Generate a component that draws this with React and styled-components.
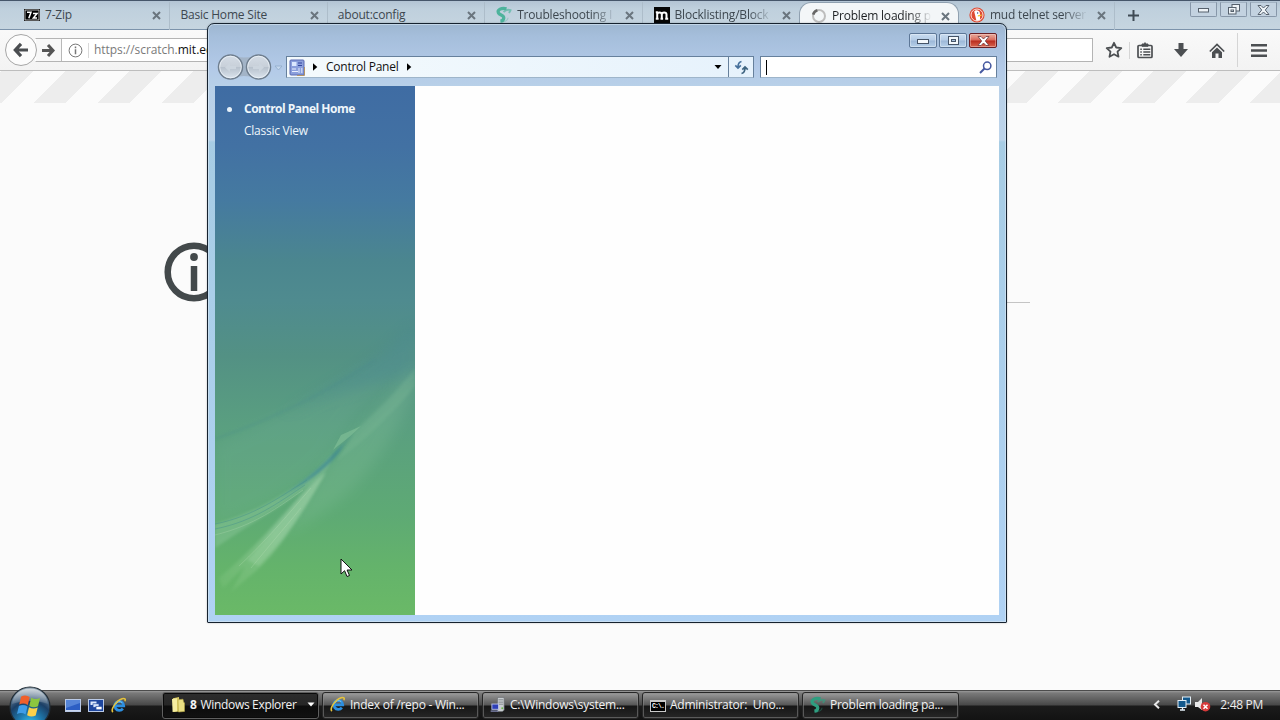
import React from 'react';
import styled, { createGlobalStyle, css } from 'styled-components';

const GlobalStyle = createGlobalStyle`
  *, *::before, *::after { box-sizing: border-box; }
  html, body { margin: 0; padding: 0; overflow: hidden; }
  body { font-family: "Open Sans", "Noto Sans", sans-serif; font-size: 12px; color: #111; }
  svg { display: block; flex: none; overflow: visible; }
`;

const Desktop = styled.div`
  position: relative;
  width: 1280px;
  height: 720px;
  display: flex;
  flex-direction: column;
  background: #fbfbfb;
  overflow: hidden;
`;

const Label = styled.span`
  white-space: pre;
  line-height: 16px;
  letter-spacing: ${(p) => p.$track ?? -0.3}px;
  font-weight: ${(p) => (p.$bold ? 700 : 400)};
  color: ${(p) => p.$color || 'inherit'};
`;

/* ---------- Browser ---------- */

const Browser = styled.div`
  flex: 1;
  display: flex;
  flex-direction: column;
`;

const TabStrip = styled.div`
  height: 30px;
  flex: none;
  display: flex;
  align-items: flex-start;
  padding: 1px 3px 0 13px;
  border-top: 1px solid #46566a;
  border-bottom: 1px solid #7c93ab;
  background: linear-gradient(#b3c4d4, #bfd0dd 8px, #c6d5e0);
`;

const Tab = styled.div`
  position: relative;
  width: 157.4px;
  height: 28px;
  flex: none;
  display: flex;
  align-items: center;
  gap: 5px;
  padding: 0 8px 2px ${(p) => (p.$icon ? 11 : 10)}px;
  color: #3d474f;
  border-right: 1px solid ${(p) => (p.$plain ? 'transparent' : '#adbdca')};
  ${(p) =>
    p.$active &&
    css`
      color: #1c1f22;
      width: 160px;
      margin: 0 -1px 0 -1px;
      padding-bottom: 1px;
      background: #f3f6f8;
      border: 1px solid #8fa0b0;
      border-bottom: 0;
      border-radius: 12px 12px 0 0;
    `}
`;

const TabTitle = styled(Label)`
  flex: 1;
  min-width: 0;
  ${(p) => p.$fade && css`mask-image: linear-gradient(90deg, #000 calc(100% - 28px), transparent calc(100% - 4px));`}
`;

const NewTab = styled.div`
  width: 36px;
  height: 26px;
  display: grid;
  place-items: center;
`;

const CaptionRow = styled.div`
  margin-left: auto;
  display: flex;
  gap: 3px;
`;

const GhostCaption = styled.div`
  width: 27px;
  height: 15px;
  display: grid;
  place-items: center;
  border: 1px solid #8797a9;
  border-top-color: #a3b3c3;
  border-radius: 0 0 2px 2px;
  background: #c3d2e0;
`;

const NavBar = styled.div`
  height: 41px;
  flex: none;
  display: flex;
  align-items: center;
  padding: 0 13px 0 5px;
  background: linear-gradient(#f9f9f9, #f3f3f3);
  border-bottom: 1px solid #bdbdbd;
`;

const BackButton = styled.div`
  width: 32px;
  height: 32px;
  display: grid;
  place-items: center;
  border: 1px solid #a6a6a6;
  border-radius: 50%;
  background: #fcfcfc;
  z-index: 1;
`;

const UrlField = styled.div`
  width: 1058px;
  height: 24px;
  margin-left: -2px;
  display: flex;
  align-items: center;
  border: 1px solid #b4b4b4;
  border-left-color: transparent;
  background: #fff;
`;

const ForwardButton = styled.div`
  width: 26px;
  height: 22px;
  display: grid;
  place-items: center;
  border-right: 1px solid #b8b8b8;
  background: #f8f8f8;
`;

const Identity = styled.div`
  width: 27px;
  height: 15px;
  display: grid;
  place-items: center;
  border-right: 1px solid #d9d9d9;
`;

const UrlText = styled.div`
  display: flex;
  padding-left: 5px;
`;

const ToolIcons = styled.div`
  flex: 1;
  display: flex;
  align-items: center;
  padding-left: 12px;
`;

const ToolSlot = styled.span`
  margin-left: ${(p) => p.$lead}px;
`;

const Divider = styled.i`
  display: block;
  width: 1px;
  height: ${(p) => p.$h}px;
  background: #d5d5d5;
`;

const Stripes = styled.div`
  height: 32px;
  flex: none;
  background: repeating-linear-gradient(135deg,
    #fbfbfb 0 1.41px, #ededed 1.41px 24.04px, #fbfbfb 24.04px 45.255px);
`;

const ErrorPage = styled.div`
  flex: 1;
  width: 866px;
  margin-left: 164px;
  padding-top: 139px;
  display: flex;
  align-items: flex-start;
  gap: 30px;
`;

const ErrorRule = styled.div`
  flex: 1;
  height: 61px;
  border-bottom: 1px solid #c4c4c4;
`;

/* ---------- Control Panel window ---------- */

const GlassWindow = styled.div`
  position: absolute;
  left: 207px;
  top: 23px;
  width: 800px;
  height: 600px;
  display: flex;
  flex-direction: column;
  padding: 0 7px 7px;
  border: 1px solid #16222f;
  border-radius: 7px 7px 1px 1px;
  background:
    linear-gradient(#9db6d0 0, #a5bedb 12px, #b3cae8 45px, #b8d0e8 62px, #bdd4ea 116px, transparent 118px),
    linear-gradient(#a5cbe0, #b0d2f4);
  box-shadow: inset 0 0 0 1px #d5e6f3aa, 0 0 2px #0004;
`;

const TitleBar = styled.div`
  height: 32px;
  flex: none;
  display: flex;
  justify-content: flex-end;
  gap: 2px;
  padding: 9px 2px 0 0;
`;

const CaptionButton = styled.div`
  width: 28px;
  height: 15px;
  display: grid;
  place-items: center;
  border: 1px solid ${(p) => (p.$close ? '#6a1f24' : '#5d7797')};
  border-radius: 2px;
  background: ${(p) =>
    p.$close
      ? 'linear-gradient(#e59a8b 0 2px, #d9695a 6px, #b92d20 7px, #d9654f)'
      : 'linear-gradient(#c9dcf1 0, #b5cce6 6px, #9db8d8 7px, #b8d1ea)'};
  box-shadow: inset 0 0 0 1px #ffffff55;
`;

const AddressRow = styled.div`
  height: 30px;
  flex: none;
  display: flex;
  align-items: flex-start;
  padding: 0 2px 0 2px;
`;

const NavOrbs = styled.div`
  width: 69px;
  height: 26px;
  display: flex;
  margin-top: -2px;
`;

const Breadcrumb = styled.div`
  width: 468px;
  height: 22px;
  display: flex;
  align-items: center;
  padding-left: 2px;
  border: 1px solid #66809c;
  border-bottom-color: #9eb5ca;
  background: linear-gradient(90deg, #f4fafd, #e6f2fc);
`;

const Spacer = styled.span`
  flex: ${(p) => (p.$w ? `0 0 ${p.$w}px` : '1')};
`;

const Refresh = styled.div`
  width: 25px;
  height: 20px;
  display: grid;
  place-items: center;
  border-left: 1px solid #66809c;
`;

const SearchField = styled.div`
  flex: 1;
  height: 22px;
  margin-left: 6px;
  display: flex;
  align-items: center;
  justify-content: space-between;
  padding: 0 4px 0 5px;
  border: 1px solid #66809c;
  border-bottom-color: #9eb5ca;
  background: #fff;
`;

const Caret = styled.i`
  width: 1px;
  height: 15px;
  background: #000;
`;

const Client = styled.div`
  flex: 1;
  display: flex;
  background: #fefefe;
`;

const Sidebar = styled.div`
  position: relative;
  width: 200px;
  overflow: hidden;
  color: #eef6fb;
  background: linear-gradient(#3f6ca3 0, #4271a3 60px, #457aa0 115px, #4b868f 175px, #4f8b8f 215px, #539184 270px,
    #5a9f80 340px, #5eaa74 430px, #64b36b 480px, #6ab967 529px);
`;

const AuroraLayer = styled.div`
  position: absolute;
  inset: 0;
`;

const SideLinks = styled.div`
  position: relative;
  display: flex;
  flex-direction: column;
  gap: 6px;
  padding: 15px 0 0 12px;
`;

const SideLink = styled.div`
  display: flex;
  align-items: center;
  height: 16px;
  &::before {
    content: '';
    width: 5px;
    height: 5px;
    margin-right: 12px;
    border-radius: 50%;
    background: ${(p) => (p.$current ? '#e8f2fa' : 'transparent')};
  }
`;

const Pointer = styled.div`
  position: absolute;
  left: 340px;
  top: 558px;
`;

/* ---------- Taskbar ---------- */

const Taskbar = styled.div`
  position: relative;
  height: 30px;
  flex: none;
  display: flex;
  align-items: flex-start;
  border-top: 1px solid #4c4c4c;
  background: linear-gradient(#9a9a9a 0, #7a7a7a 2px, #484848 14px, #1b1b1b 15px, #121212 30px);
`;

const StartOrb = styled.div`
  width: 62px;
  padding-left: 9px;
  margin-top: -5px;
`;

const QuickLaunch = styled.div`
  width: 100px;
  display: flex;
  align-items: center;
  gap: 7px;
  height: 29px;
  padding-left: 3px;
`;

const TaskList = styled.div`
  display: flex;
  gap: 3px;
  padding-top: 1px;
`;

const Task = styled.div`
  width: 157px;
  height: 27px;
  display: flex;
  align-items: center;
  gap: 4px;
  padding: 0 3px 2px 7px;
  color: #f2f2f2;
  border: 1px solid ${(p) => (p.$pressed ? '#5f5f5f' : '#262626')};
  border-radius: 3px;
  box-shadow: inset 0 0 0 1px ${(p) => (p.$pressed ? '#0a0a0a' : '#8b8b8b88')};
  background: ${(p) =>
    p.$pressed
      ? 'linear-gradient(#2d2d2d, #262626 12px, #0c0c0c 13px, #111)'
      : 'linear-gradient(#9c9c9c, #565656 12px, #161616 13px, #262626)'};
`;

const Tray = styled.div`
  margin-left: auto;
  height: 27px;
  display: flex;
  align-items: center;
  padding-right: 17px;
  color: #ededed;
`;

/* ---------- Icons ---------- */

const TabClose = () => (
  <svg width="9" height="9" viewBox="0 0 9 9">
    <path d="M1 1l7 7M8 1l-7 7" stroke="#6a757e" strokeWidth="2" />
  </svg>
);

const SevenZip = () => (
  <svg width="16" height="12" viewBox="0 0 16 12">
    <rect width="16" height="12" fill="#000" />
    <rect x="1" y="1" width="14" height="10" fill="none" stroke="#fff" strokeWidth=".7" />
    <path d="M3 3.3h4L4.8 9.2M9 4.5h4L9.4 9H13" fill="none" stroke="#fff" strokeWidth="1.5" />
  </svg>
);

const ScratchSwirl = ({ tint = '#4db39c' }) => (
  <svg width="16" height="16" viewBox="0 0 16 16" fill="none" stroke={tint}>
    <path d="M10.500 1.800C5.500.3 1 3 2.400 5.900 3.800 8.400 8 8 7.800 11c-.2 2-1.800 3-3.400 3.200" strokeWidth="3.200" />
    <path d="M7.500 5c2.500-2.400 4.800-2.600 7-1.800L13 6" strokeWidth="1.900" opacity=".65" />
    <path d="M7 14.800c3-.4 4.800-2 5-4" strokeWidth="1.200" opacity=".35" />
  </svg>
);

const MozM = () => (
  <svg width="16" height="16" viewBox="0 0 16 16">
    <rect width="16" height="16" fill="#060606" />
    <path d="M3.200 4.500V12M3.200 7.500c0-2.800 4.600-2.800 4.600 0V12M7.800 7.500c0-2.800 4.700-2.800 4.700 0V12M1.800 5.200h2M1.800 11.800h2.800M6.500 11.800h2.600M11.200 11.800h3" fill="none" stroke="#fff" strokeWidth="2" />
  </svg>
);

const Throbber = () => (
  <svg width="16" height="16" viewBox="0 0 16 16" fill="none">
    <circle cx="8" cy="8" r="6" stroke="#bdbdbd" strokeWidth="2" />
    <path d="M2.200 6.600A6 6 0 0 1 6.400 2.200" stroke="#666" strokeWidth="2.600" />
  </svg>
);

const Duck = () => (
  <svg width="16" height="16" viewBox="0 0 16 16">
    <circle cx="8" cy="8" r="7.600" fill="#de4a33" />
    <circle cx="8" cy="8" r="6" fill="none" stroke="#fbe3de" strokeWidth="1" />
    <path d="M5.200 4.500C6.500 2.600 10.500 3 10.900 6l.2 6.800-3.600 1.200z" fill="#fff" />
    <path d="M8.800 8.200l4-.6-.4 1.300-3.600.6z" fill="#f8c42c" />
    <circle cx="8.600" cy="6" r=".7" fill="#2d4f8e" />
  </svg>
);

const IeIcon = () => (
  <svg width="16" height="17" viewBox="0 0 17 17" fill="none">
    <path d="M12.600 11.800A4.800 4.800 0 1 1 13.600 9H5" stroke="#2c8fe0" strokeWidth="2.900" />
    <path d="M12 5.500A4.400 4.400 0 0 0 5 7" stroke="#8dd0f8" strokeWidth="1" />
    <path d="M2 15.500C-.5 13 5 3.500 11.800 1.400c3-.9 4 .2 3 2.600" stroke="#e5c33c" strokeWidth="1.700" />
  </svg>
);

const FolderPair = () => (
  <svg width="16" height="17" viewBox="-1 0 16 17">
    <path d="M2 2.200L8 1l1 14.500-6.600.5z" fill="#d8c961" />
    <path d="M1 3l5-.8v13L1.600 16z" fill="#f5eda0" />
    <path d="M7 3.800l5-.6.6 3 .9.600v8.600L7.500 16z" fill="#eadf83" stroke="#b5a643" strokeWidth=".6" />
  </svg>
);

const ServerIcon = () => (
  <svg width="16" height="17" viewBox="0 0 17 17">
    <path d="M8 1h7v13.500l-2 1.500H8z" fill="#c9cdd0" stroke="#6b6f74" strokeWidth=".7" />
    <path d="M9 3.500h5M9 6h5M9 8.200h5" stroke="#82878d" />
    <rect x="2" y="8" width="7" height="5.600" fill="#2e3fb7" stroke="#b8c0e8" />
    <path d="M.7 15.500h8" stroke="#8389b4" strokeWidth="1.400" />
    <circle cx="13" cy="12.500" r="1" fill="#68b64a" />
  </svg>
);

const ConsoleBox = styled.div`
  width: 16px;
  height: 12px;
  flex: none;
  margin-top: 2px;
  display: flex;
  align-items: center;
  padding-left: 1px;
  background: #000;
  border: 1px solid #c9c9c9;
  border-top-width: 2px;
  color: #fff;
  font: 700 6.5px "Liberation Mono", monospace;
  letter-spacing: -0.9px;
`;

const StartLogo = () => (
  <svg width="42" height="42" viewBox="0 0 42 42">
    <defs>
      <radialGradient id="orb" cx=".5" cy=".95" r=".95">
        <stop offset="0" stopColor="#39c9f2" />
        <stop offset=".3" stopColor="#1f7fb4" />
        <stop offset=".62" stopColor="#1b3f66" />
        <stop offset="1" stopColor="#8b9daa" />
      </radialGradient>
      <linearGradient id="gloss" x1="0" y1="0" x2="0" y2="1">
        <stop offset="0" stopColor="#fff" stopOpacity=".65" />
        <stop offset="1" stopColor="#fff" stopOpacity=".12" />
      </linearGradient>
    </defs>
    <circle cx="21" cy="21" r="20" fill="url(#orb)" stroke="#222d36" strokeWidth="1.200" />
    <path d="M3 18C4 8 12 2.500 21 2.500S38 8 39 18c-10-4-24-4-36 0z" fill="url(#gloss)" />
    <path d="M12.200 10.500c3-1.600 5.700-1.300 8.500.5l-1.900 8c-2.900-1.700-5.700-1.900-8.600-.4z" fill="#f0602b" />
    <path d="M22.200 11.800c3 1.600 5.700 1.700 8.800.2l-2 8.200c-3 1.500-5.800 1.300-8.700-.3z" fill="#8cc63f" />
    <path d="M9.900 20c3-1.500 5.700-1.300 8.600.4l-2 8c-2.800-1.700-5.500-1.900-8.500-.4z" fill="#3e9de8" />
    <path d="M20 21.300c3 1.600 5.700 1.700 8.700.3l-2 8c-3 1.500-5.700 1.300-8.600-.3z" fill="#fbd04a" />
  </svg>
);

const tabs = [
  { title: '7-Zip', icon: <SevenZip /> },
  { title: 'Basic Home Site' },
  { title: 'about:config' },
  { title: 'Troubleshooting I', icon: <ScratchSwirl />, fade: true },
  { title: 'Blocklisting/Block', icon: <MozM />, fade: true, plain: true },
  { title: 'Problem loading p', icon: <Throbber />, fade: true, active: true },
  { title: 'mud telnet server', icon: <Duck />, fade: true },
];

const tasks = [
  { title: 'Index of /repo - Win...', icon: <IeIcon /> },
  { title: 'C:\\Windows\\system...', icon: <ServerIcon /> },
  { title: 'Administrator:  Uno...', icon: <ConsoleBox>C:\.</ConsoleBox> },
  { title: 'Problem loading pa...', icon: <ScratchSwirl tint="#2f9e80" /> },
];

const BrowserToolbar = () => (
  <NavBar>
    <BackButton>
      <svg width="16" height="14" viewBox="0 0 16 14" fill="none" stroke="#4a4d50" strokeWidth="3.200">
        <path d="M8 .8L2.300 7 8 13.200M2.500 7H15" />
      </svg>
    </BackButton>
    <UrlField>
      <ForwardButton>
        <svg width="13" height="13" viewBox="0 0 13 13" fill="none" stroke="#555" strokeWidth="3">
          <path d="M6 1l5 5.500L6 12M0 6.500h11" />
        </svg>
      </ForwardButton>
      <Identity>
        <svg width="15" height="15" viewBox="0 0 15 15" fill="none" stroke="#777">
          <circle cx="7.500" cy="7.500" r="6.400" />
          <path d="M7.500 6.300v5M7.500 3.400v1.800" strokeWidth="1.500" />
        </svg>
      </Identity>
      <UrlText>
        <Label $color="#7a7a7a" $track={-0.05}>https://scratch.</Label>
        <Label $color="#111" $track={0}>mit.edu</Label>
      </UrlText>
    </UrlField>
    <ToolIcons>
      <svg width="18" height="18" viewBox="0 0 18 18" fill="none" stroke="#4c4f52" strokeWidth="1.800">
        <path d="M9 1.800l2.200 4.700 5.100.6-3.800 3.500 1 5.100L9 13.200l-4.500 2.500 1-5.100L1.700 7.100l5.100-.6z" strokeLinejoin="round" />
      </svg>
      <ToolSlot $lead={6}><Divider $h={17} /></ToolSlot>
      <ToolSlot $lead={7}>
        <svg width="16" height="17" viewBox="0 0 16 17" fill="none" stroke="#4c4f52" strokeWidth="1.700">
          <path d="M5 3.500H2a1 1 0 0 0-1 1V14.500a1 1 0 0 0 1 1h12a1 1 0 0 0 1-1v-10a1 1 0 0 0-1-1h-3" />
          <path d="M5 4.300V2h1.500l1.500-1.300L9.500 2H11v2.300z" fill="#4c4f52" strokeWidth="1" />
          <path d="M3.300 7.200h1.500M6.300 7.200h7M3.300 10h1.500M6.300 10h7M3.300 12.800h1.500M6.300 12.800h7" strokeWidth="1.500" />
        </svg>
      </ToolSlot>
      <ToolSlot $lead={21}>
        <svg width="14" height="14" viewBox="0 0 14 14" fill="#4c4f52">
          <path d="M4.500 0h5v6H14l-7 8-7-8h4.500z" />
        </svg>
      </ToolSlot>
      <ToolSlot $lead={21}>
        <svg width="16" height="15" viewBox="0 0 16 15">
          <path d="M.8 8.500L8 1.500l7.200 7" fill="none" stroke="#4c4f52" strokeWidth="1.700" />
          <path d="M3 9.300l5-4.800 5 4.800V15H9.500v-4.500h-3V15H3z" fill="#4c4f52" />
        </svg>
      </ToolSlot>
      <ToolSlot $lead={12}><Divider $h={34} /></ToolSlot>
      <ToolSlot $lead={13}>
        <svg width="16" height="13" viewBox="0 0 16 13" fill="#4c4f52">
          <path d="M0 0h16v2.600H0zM0 5.200h16v2.600H0zM0 10.400h16V13H0z" />
        </svg>
      </ToolSlot>
    </ToolIcons>
  </NavBar>
);

const BrowserWindow = () => (
  <Browser>
    <TabStrip>
      {tabs.map((t) => (
        <Tab key={t.title} $icon={!!t.icon} $active={t.active} $plain={t.plain}>
          {t.icon}
          <TabTitle $fade={t.fade} $track={-0.2}>{t.title}</TabTitle>
          <TabClose />
        </Tab>
      ))}
      <NewTab>
        <svg width="11" height="11" viewBox="0 0 11 11">
          <path d="M5.500 0v11M0 5.500h11" stroke="#3f4a54" strokeWidth="2" />
        </svg>
      </NewTab>
      <CaptionRow>
        <GhostCaption>
          <svg width="11" height="6" viewBox="0 0 11 6"><rect x=".5" y="1.500" width="10" height="3.500" fill="#eef3f7" stroke="#56616d" /></svg>
        </GhostCaption>
        <GhostCaption>
          <svg width="12" height="11" viewBox="0 0 12 11" fill="#eef3f7" stroke="#56616d">
            <rect x="4" y=".5" width="7.500" height="6.500" />
            <rect x=".5" y="3.500" width="7.500" height="6.500" />
            <rect x="3" y="6" width="2.500" height="1.500" />
          </svg>
        </GhostCaption>
        <GhostCaption>
          <svg width="13" height="10" viewBox="0 0 13 10">
            <path d="M1 .5h3l2.500 2.500L9 .5h3L8.300 5l3.700 4.500H9L6.500 7 4 9.500H1L4.700 5z" fill="#eef3f7" stroke="#56616d" />
          </svg>
        </GhostCaption>
      </CaptionRow>
    </TabStrip>
    <BrowserToolbar />
    <Stripes />
    <ErrorPage>
      <svg width="60" height="60" viewBox="0 0 60 60" fill="none" stroke="#43494b">
        <circle cx="30" cy="30" r="26.300" strokeWidth="6.500" />
        <path d="M30 24v25" strokeWidth="6.500" />
        <circle cx="30" cy="15" r="3.900" fill="#43494b" stroke="none" />
      </svg>
      <ErrorRule />
    </ErrorPage>
  </Browser>
);

const Aurora = () => (
  <AuroraLayer>
    <svg width="200" height="529" viewBox="0 0 200 529">
      <defs>
        <filter id="soft" x="-20%" y="-20%" width="140%" height="140%"><feGaussianBlur stdDeviation="1.600" /></filter>
        <filter id="haze" x="-30%" y="-30%" width="160%" height="160%"><feGaussianBlur stdDeviation="7" /></filter>
        <linearGradient id="ray" x1="0" y1="1" x2="1" y2="0">
          <stop offset="0" stopColor="#a9dca0" stopOpacity=".1" />
          <stop offset=".5" stopColor="#b4dfba" stopOpacity=".35" />
          <stop offset="1" stopColor="#b4dfba" stopOpacity=".3" />
        </linearGradient>
      </defs>
      <path d="M0 358C70 330 140 290 200 248V285C150 305 130 340 112 372 80 405 40 428 0 440z" fill="#7fb5a4" opacity=".15" filter="url(#haze)" />
      <path d="M60 330C110 306 160 276 200 238V290C160 296 110 310 60 330z" fill="#3f8093" opacity=".3" filter="url(#haze)" />
      <path d="M0 353C60 332 110 308 160 274" fill="none" stroke="#3f8090" strokeWidth="2" opacity=".22" filter="url(#soft)" />
      <path d="M200 278C165 322 150 338 112 378L70 450 110 425C150 400 180 350 200 305z" fill="#8cc6a0" opacity=".24" filter="url(#haze)" />
      <path d="M200 282C185 302 165 322 140 345L122 375C155 350 180 325 200 300z" fill="#8cc6a0" opacity=".2" filter="url(#soft)" />
      <path d="M0 438C50 424 92 396 118 368L113 382C90 408 50 428 0 462z" fill="#94cca2" opacity=".38" filter="url(#soft)" />
      <path d="M62 414C88 396 118 372 138 347 126 366 104 392 62 414z" fill="#2f7d96" opacity=".35" filter="url(#soft)" />
      <path d="M76 404C98 390 112 376 128 358 124 370 104 390 76 404z" fill="#2f7d96" opacity=".5" filter="url(#soft)" />
      <path d="M0 438C40 430 66 410 92 394M0 443C40 435 64 416 90 399" fill="none" stroke="#3f8b8c" opacity=".4" />
      <path d="M0 449C40 439 62 422 88 404" fill="none" stroke="#b4dcb4" strokeWidth="1" opacity=".3" />
      <path d="M118 364l8-15 20-9c-10 10-18 16-28 24z" fill="#8cc79d" opacity=".5" />
      <path d="M111 386C86 402 60 445 4 492L8 502 30 480 16 506 42 484C68 460 90 422 111 386z" fill="url(#ray)" filter="url(#soft)" />
      <path d="M111 386C90 402 66 438 32 474L44 480C70 452 92 420 111 386z" fill="#a5d7aa" opacity=".35" filter="url(#soft)" />
      <path d="M96 402C70 432 50 456 24 480M86 422C66 446 54 460 36 482" fill="none" stroke="#c0e4bd" opacity=".25" />
    </svg>
  </AuroraLayer>
);

const Triangle = ({ down }) => (
  <svg width="8" height="8" viewBox="0 0 8 8" fill="#000">
    <path d={down ? 'M.5 2h7L4 6z' : 'M2 .3v7.400L6.300 4z'} />
  </svg>
);

const ControlPanel = () => (
  <GlassWindow>
    <TitleBar>
      <CaptionButton>
        <svg width="12" height="6" viewBox="0 0 12 6"><rect x=".5" y="1.500" width="11" height="4" fill="#f3f8fc" stroke="#455468" /></svg>
      </CaptionButton>
      <CaptionButton>
        <svg width="11" height="9" viewBox="0 0 11 9" stroke="#455468">
          <rect x=".5" y=".5" width="10" height="8" fill="#f3f8fc" />
          <rect x="3.500" y="3.500" width="4" height="2" fill="#a9c2de" />
        </svg>
      </CaptionButton>
      <CaptionButton $close>
        <svg width="13" height="10" viewBox="0 0 13 10">
          <path d="M1 .5h3l2.500 2.500L9 .5h3L8.300 5l3.700 4.500H9L6.500 7 4 9.500H1L4.700 5z" fill="#fff" stroke="#6b3a40" strokeWidth=".8" />
        </svg>
      </CaptionButton>
    </TitleBar>
    <AddressRow>
      <NavOrbs>
        <svg width="66" height="26" viewBox="0 0 66 26">
          <defs>
            <linearGradient id="disc" x1="0" y1="0" x2="0" y2="1">
              <stop offset="0" stopColor="#d5dde6" />
              <stop offset=".48" stopColor="#c8d0d9" />
              <stop offset=".52" stopColor="#b8c2cd" />
              <stop offset="1" stopColor="#dde6ef" />
            </linearGradient>
          </defs>
          <path d="M12 1q15 5 30 0v24q-15-6-30 0z" fill="#a3b4c7" />
          <circle cx="13.500" cy="13" r="12" fill="url(#disc)" stroke="#6f7e8e" strokeWidth="1.500" />
          <circle cx="41.500" cy="13" r="12" fill="url(#disc)" stroke="#6f7e8e" strokeWidth="1.500" />
          <circle cx="13.500" cy="13" r="10.800" fill="none" stroke="#eef4f9" strokeWidth=".8" />
          <circle cx="41.500" cy="13" r="10.800" fill="none" stroke="#eef4f9" strokeWidth=".8" />
          <path d="M8 13.500l5-4.500v3h6v3h-6v3zM47 13.500l-5-4.500v3h-6v3h6v3z" fill="#ccd5de" />
          <path d="M58 12h7l-3.500 4z" fill="#c5d8ee" stroke="#8fabc9" strokeWidth=".8" />
        </svg>
      </NavOrbs>
      <Breadcrumb>
        <svg width="16" height="17" viewBox="0 0 16 17">
          <rect x="1" y="1" width="14" height="15" rx="1" fill="#8b9fdc" stroke="#5b6bb2" />
          <rect x="3" y="3" width="4.500" height="4" fill="#dce8ff" />
          <path d="M9 4h4M9 6.500h4" stroke="#35479f" />
          <path d="M3 10h4M3 12.500h6" stroke="#e9f0ff" strokeWidth="1.200" />
          <path d="M10 9v5M12.800 9v5" stroke="#d3dcf8" strokeWidth="1.200" />
          <path d="M15.500 8v8.500H8" stroke="#b39468" fill="none" />
        </svg>
        <Spacer $w={6} />
        <Triangle />
        <Spacer $w={7} />
        <Label $track={-0.25}>Control Panel</Label>
        <Spacer $w={7} />
        <Triangle />
        <Spacer />
        <Triangle down />
        <Spacer $w={6} />
        <Refresh>
          <svg width="15" height="15" viewBox="0 0 15 15" fill="none" stroke="#47719c" strokeWidth="1.700">
            <path d="M7.500 1.500C5 2 4 3.500 4 7M1.300 5.300L4 8l2.800-2.700" />
            <path d="M7.500 13.500c2.500-.5 3.500-2 3.500-5.500M8.300 9.700L11 7l2.800 2.700" stroke="#3e6480" />
          </svg>
        </Refresh>
      </Breadcrumb>
      <SearchField>
        <Caret />
        <svg width="13" height="13" viewBox="0 0 13 13" fill="none" stroke="#4558a0">
          <circle cx="8.200" cy="4.800" r="3.700" strokeWidth="1.500" />
          <path d="M5.500 7.500L1 12" strokeWidth="2" />
        </svg>
      </SearchField>
    </AddressRow>
    <Client>
      <Sidebar>
        <Aurora />
        <SideLinks>
          <SideLink $current><Label $bold $track={-0.5}>Control Panel Home</Label></SideLink>
          <SideLink><Label $track={-0.25}>Classic View</Label></SideLink>
        </SideLinks>
      </Sidebar>
    </Client>
  </GlassWindow>
);

const SystemTaskbar = () => (
  <Taskbar>
    <StartOrb><StartLogo /></StartOrb>
    <QuickLaunch>
      <svg width="16" height="13" viewBox="0 0 16 13">
        <rect x=".5" y=".5" width="15" height="12" fill="#2c5fc4" stroke="#b9c9e6" />
        <path d="M1 1h14v3L1 9z" fill="#5585d8" />
        <path d="M1 11.500h14" stroke="#c9d6ee" />
      </svg>
      <svg width="16" height="13" viewBox="0 0 16 13">
        <rect x=".5" y=".5" width="15" height="12" fill="#1f479e" stroke="#b9c9e6" />
        <rect x="2.500" y="2.500" width="6" height="3.500" fill="#dce8fb" />
        <rect x="5" y="4.800" width="6" height="3.500" fill="#dce8fb" stroke="#1f479e" strokeWidth=".7" />
        <rect x="8" y="7.300" width="6" height="3.500" fill="#fff" stroke="#1f479e" strokeWidth=".7" />
      </svg>
      <IeIcon />
    </QuickLaunch>
    <TaskList>
      <Task $pressed>
        <FolderPair />
        <Label $bold>8</Label>
        <Label $track={-0.33}>Windows Explorer</Label>
        <Spacer />
        <svg width="8" height="5" viewBox="0 0 8 5"><path d="M.5.500h7L4 4.500z" fill="#fff" /></svg>
      </Task>
      {tasks.map((t) => (
        <Task key={t.title}>
          {t.icon}
          <Label $track={-0.25}>{t.title}</Label>
        </Task>
      ))}
    </TaskList>
    <Tray>
      <svg width="7" height="9" viewBox="0 0 7 9"><path d="M6 .8L2 4.500 6 8.200" fill="none" stroke="#e8e8e8" strokeWidth="2" /></svg>
      <Spacer $w={17} />
      <svg width="15" height="18" viewBox="0 0 15 18" fill="#12588c" stroke="#e3eef6">
        <rect x="5.500" y="1" width="8" height="7" />
        <rect x="1" y="4.500" width="8" height="7" />
        <path d="M3 14h5M5.500 11.500V14" strokeWidth="1.300" />
      </svg>
      <Spacer $w={3} />
      <svg width="16" height="15" viewBox="0 0 16 15">
        <path d="M0 5h3l4-4v12L3 10H0z" fill="#e9e9e9" />
        <circle cx="10.500" cy="9.700" r="4.800" fill="#d63a3a" />
        <path d="M8.500 7.700l4 4M12.500 7.700l-4 4" stroke="#fff" strokeWidth="1.500" />
      </svg>
      <Spacer $w={9} />
      <Label $track={-0.3}>2:48 PM</Label>
    </Tray>
  </Taskbar>
);

export default function App() {
  return (
    <>
      <GlobalStyle />
      <Desktop>
        <BrowserWindow />
        <SystemTaskbar />
        <ControlPanel />
        <Pointer>
          <svg width="13" height="20" viewBox="0 0 13 20">
            <path d="M1 1v15l3.600-3.300L7 18.500l2.500-1-2.400-5.500H12z" fill="#fff" stroke="#111" />
          </svg>
        </Pointer>
      </Desktop>
    </>
  );
}
